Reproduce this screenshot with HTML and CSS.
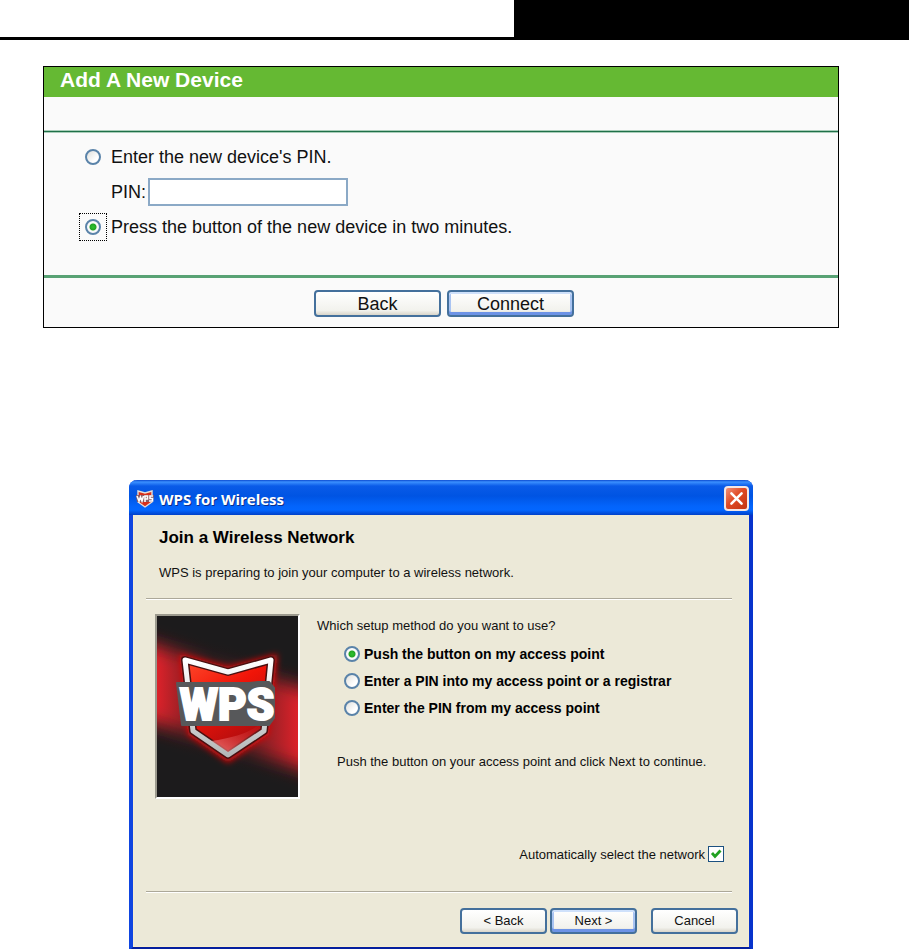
FILE: index.html
```html
<!DOCTYPE html>
<html lang="en">
<head>
<meta charset="utf-8">
<title>Add A New Device</title>
<link rel="stylesheet" href="styles.css">
</head>
<body>
<header class="page-head"><div class="page-head-block"></div></header>

<form class="panel">
  <h1 class="panel-title">Add A New Device</h1>
  <div class="panel-strip"></div>
  <div class="panel-body">
    <div class="option">
      <span class="radio-box"><input class="radio" type="radio" name="method" id="m-pin"></span>
      <label for="m-pin">Enter the new device's PIN.</label>
    </div>
    <div class="option pin-row">
      <label for="pin">PIN:</label>
      <input class="pin-input" type="text" id="pin">
    </div>
    <div class="option">
      <span class="radio-box focused"><input class="radio" type="radio" name="method" id="m-push" checked></span>
      <label for="m-push">Press the button of the new device in two minutes.</label>
    </div>
  </div>
  <div class="panel-actions">
    <button class="xp-button" type="button">Back</button>
    <button class="xp-button default" type="button">Connect</button>
  </div>
</form>

<section class="dialog">
  <div class="titlebar">
    <svg class="title-icon" viewBox="0 0 18 18" aria-hidden="true">
      <path d="M2 1 L9 3 L16 1 V12 L9 17 L2 12 Z" fill="#d8301c" stroke="#e6ded8" stroke-width="1.4"/>
      <path d="M0 5 H18 L17 12 H1 Z" fill="#8d5b62"/>
      <path d="M1 6 L3 11 L4.500 7 L6 11 L7.500 6 M9 12 V6 H11.500 V9 H9 M17 6 H14 V8.500 H16.500 V11 H13" fill="none" stroke="#fff" stroke-width="1.6"/>
    </svg>
    <h2 class="title-text">WPS for Wireless</h2>
    <button class="close" type="button" aria-label="Close">
      <svg viewBox="0 0 20 20"><path d="M4 4 L16 16 M16 4 L4 16" stroke="#fff" stroke-width="3" stroke-linecap="round"/></svg>
    </button>
  </div>
  <form class="dialog-content">
    <div class="intro">
      <h3 class="intro-title">Join a Wireless Network</h3>
      <p class="intro-text">WPS is preparing to join your computer to a wireless network.</p>
    </div>
    <hr class="rule">
    <div class="main">
      <svg class="art" viewBox="0 0 141 181" role="img" aria-label="WPS">
        <defs>
          <linearGradient id="shade" x1="0" y1="0" x2="1" y2="0">
            <stop offset="0" stop-color="#1c1b1c" stop-opacity="0"/>
            <stop offset=".4" stop-color="#1c1b1c" stop-opacity=".75"/>
            <stop offset=".65" stop-color="#1c1b1c" stop-opacity=".6"/>
            <stop offset="1" stop-color="#1c1b1c" stop-opacity="0"/>
          </linearGradient>
          <linearGradient id="red" x1="0" y1="0" x2=".6" y2="1">
            <stop offset="0" stop-color="#ff4a2c"/>
            <stop offset=".45" stop-color="#f01408"/>
            <stop offset="1" stop-color="#a80c10"/>
          </linearGradient>
          <linearGradient id="silver" x1="0" y1="0" x2="0" y2="1">
            <stop offset="0" stop-color="#fff"/>
            <stop offset="1" stop-color="#b4b8b8"/>
          </linearGradient>
          <linearGradient id="shine" x1="0" y1="1" x2="1" y2="0">
            <stop offset="0" stop-color="#f08080" stop-opacity=".9"/>
            <stop offset="1" stop-color="#d02020" stop-opacity=".1"/>
          </linearGradient>
          <filter id="glow" x="-30%" y="-30%" width="160%" height="160%"><feGaussianBlur stdDeviation="3"/></filter>
          <filter id="soft" x="-30%" y="-30%" width="160%" height="160%"><feGaussianBlur stdDeviation="9"/></filter>
        </defs>
        <rect width="141" height="181" fill="#1c1b1c"/>
        <path d="M-40 18 L180 82 V164 L-40 96 Z" fill="#dc222a" filter="url(#soft)"/>
        <rect width="141" height="181" fill="url(#shade)"/>
        <path d="M26 42 L71 54 L117 42 L109 117 L71 143 L34 117 Z" fill="#e01010" stroke="#e01010" stroke-width="6" filter="url(#glow)"/>
        <path d="M28 44 L71 56 L114 44 L107 115 L71 139 L36 115 Z" fill="url(#red)" stroke="#4a1010" stroke-width="8" stroke-linejoin="round"/>
        <path d="M54 125 Q90 120 104 107 V114 L71 137 Z" fill="url(#shine)"/>
        <path d="M28 44 L71 56 L114 44 L107 115 L71 139 L36 115 Z" fill="none" stroke="url(#silver)" stroke-width="5" stroke-linejoin="round"/>
        <path d="M20 67 H92 L101 66 H112 L117 72 V102 L112 109 H25 Z" fill="#57585a" stroke="#57585a" stroke-width="2" stroke-linejoin="round"/>
        <text class="art-text" x="70" y="104" text-anchor="middle">WPS</text>
      </svg>
      <div class="choices">
        <p class="question">Which setup method do you want to use?</p>
        <div class="choice"><input class="radio" type="radio" name="setup" id="s1" checked><label for="s1">Push the button on my access point</label></div>
        <div class="choice"><input class="radio" type="radio" name="setup" id="s2"><label for="s2">Enter a PIN into my access point or a registrar</label></div>
        <div class="choice"><input class="radio" type="radio" name="setup" id="s3"><label for="s3">Enter the PIN from my access point</label></div>
        <p class="hint">Push the button on your access point and click Next to continue.</p>
      </div>
    </div>
    <div class="auto">
      <label for="auto">Automatically select the network</label>
      <span class="check-box"><input class="check" type="checkbox" id="auto" checked><svg class="tick" viewBox="0 0 16 16" aria-hidden="true"><path d="M4 7 L7 10.500 L12.500 4.500" fill="none" stroke="#21a121" stroke-width="2.800"/></svg></span>
    </div>
    <hr class="rule">
    <div class="dialog-actions">
      <button class="xp-button small" type="button">&lt; Back</button>
      <button class="xp-button small default" type="button">Next &gt;</button>
      <button class="xp-button small apart" type="button">Cancel</button>
    </div>
  </form>
</section>
</body>
</html>
```
FILE: styles.css
```css
* { box-sizing: border-box; }
body { margin: 0; background: #fff; color: #111; font-family: "Liberation Sans", Arial, sans-serif; }
h1, h2, h3, p { margin: 0; }
button, input { font-family: inherit; color: inherit; }

.page-head { display: flex; justify-content: flex-end; height: 40px; border-bottom: 3px solid #000; }
.page-head-block { width: 43.5%; background: #000; }

/* Router panel */
.panel { margin: 26px 70px 0 43px; border: 1px solid #000; background: #fafafa; font-size: 18px; }
.panel-title { height: 30px; padding-left: 16px; background: #65b933; color: #fff; font-size: 21px; line-height: 26px; }
.panel-strip { height: 35px; border-bottom: 1px solid #1f7048; box-shadow: inset 0 -1px #a9cdb9, 0 1px #a9cdb9; }
.panel-body { display: flex; flex-direction: column; gap: 7px; padding: 11px 0 34px 35px; }
.option { display: flex; align-items: center; gap: 4px; height: 28px; }
.pin-row { gap: 2px; padding-left: 32px; }
.pin-input { width: 200px; height: 28px; padding: 0 6px; border: 2px solid #8ba9c6; background: #fff; font-size: 18px; }
.radio-box { display: grid; place-items: center; width: 28px; height: 28px; border: 1px dotted transparent; }
.radio-box.focused { border-color: #000; }
.panel-actions { display: flex; justify-content: center; gap: 6px; padding: 12px 0 10px 6px; border-top: 3px solid #58a274; }

.radio { appearance: none; flex: none; width: 16px; height: 16px; margin: 0; border: 2px solid #5a83a9; border-radius: 50%; background: linear-gradient(135deg, #e0e0dc, #fff 70%); }
.radio:checked { background: radial-gradient(circle, #2fc42f 0, #23a523 3px, #fafafa 4px); }

.xp-button { width: 127px; height: 27px; padding: 0; border: 2px solid #44709c; border-radius: 4px; background: linear-gradient(#fff, #f2f2ed 80%, #d9d5ca); font-size: 18px; line-height: 20px; }
.xp-button.default { box-shadow: inset 0 2px #cfe1fb, inset 0 -3px #6d93e6, inset 2px 0 #a9c4f2, inset -2px 0 #a9c4f2; }
.xp-button.small { width: 87px; height: 26px; font-size: 13px; }
.xp-button.apart { margin-left: 11px; }

/* Setup wizard window */
.dialog { margin: 152px 156px 0 129px; border: solid #0831d9; border-width: 0 4px 4px; border-color: #0a3fe0 #0733cc #041f9e #0f45e0; border-radius: 8px 8px 0 0; background: #ece9d8; font-size: 13px; }
.titlebar { display: flex; align-items: center; gap: 5px; height: 35px; margin: 0 -4px; padding: 2px 4px 0 7px; border-radius: 8px 8px 0 0; background: linear-gradient(#0b4ad0 0, #3b90ff 2px, #0a5be8 6px, #0054e3 16px, #0364fb 26px, #0366ff 30px, #0040c8 35px); }
.title-icon { width: 18px; height: 18px; }
.title-text { flex: 1; color: #fff; font-family: "Open Sans", "Noto Sans", sans-serif; font-size: 15px; line-height: 20px; text-shadow: 1px 1px #0a2f8c; }
.close { display: grid; place-items: center; width: 25px; height: 25px; padding: 0; border: 2px solid #f4e6e4; border-radius: 4px; background: linear-gradient(135deg, #f09078, #e04a24 45%, #c23412); }
.close svg { width: 17px; height: 17px; }
.dialog-content { padding: 0 10px 12px 12px; border: 1px solid #f6ecd0; border-top: 0; }
.intro { height: 83px; padding: 13px 13px 0; }
.intro-title { font-size: 17px; line-height: 20px; color: #000; }
.intro-text { margin-top: 15px; line-height: 20px; }
.rule { height: 2px; margin: 0 6px 0 0; border: 0; border-top: 1px solid #aca899; background: #fff; }
.rule + .main { padding-top: 14px; }
.main { display: flex; gap: 17px; padding-left: 9px; }
.art { flex: none; width: 145px; height: 185px; border: 2px solid; border-color: #9c9a8e #fff #fff #9c9a8e; }
.art-text { fill: #fff; stroke: #fff; stroke-width: 2; font-family: Roboto, "Liberation Sans", sans-serif; font-weight: 900; font-size: 44px; }
.choices { flex: 1; }
.question { margin-bottom: 2px; line-height: 24px; }
.choice { display: flex; align-items: center; gap: 4px; height: 27px; padding-left: 27px; color: #000; font-size: 14px; font-weight: bold; }
.hint { margin-top: 29px; padding-left: 20px; line-height: 24px; }
.auto { display: flex; justify-content: flex-end; align-items: center; gap: 3px; height: 20px; margin: 45px 14px 27px 0; }
.check-box { display: grid; }
.check, .tick { grid-area: 1 / 1; width: 16px; height: 16px; margin: 0; }
.check { appearance: none; border: 1px solid #1c5180; background: #fff; }
.tick { visibility: hidden; pointer-events: none; }
.check:checked + .tick { visibility: visible; }
.dialog-actions { display: flex; justify-content: flex-end; gap: 3px; padding: 15px 0 0; }
```
